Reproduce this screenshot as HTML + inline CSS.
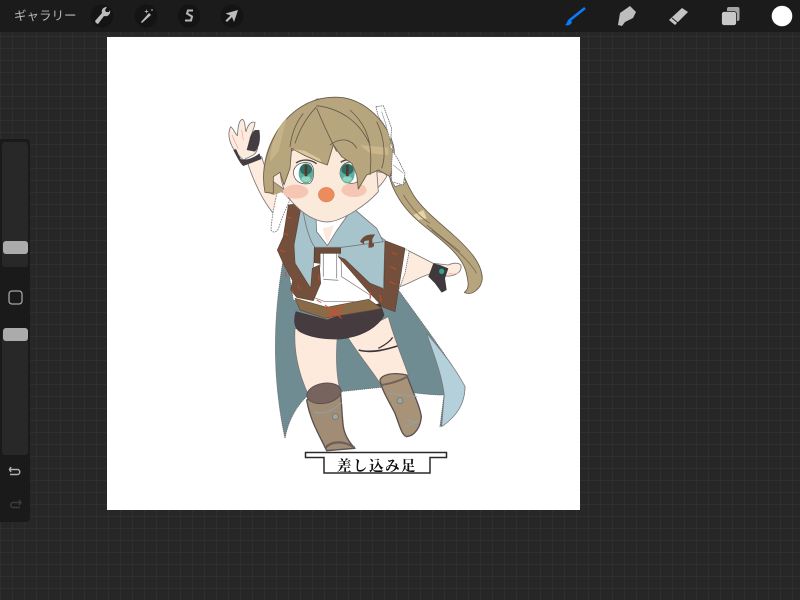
<!DOCTYPE html>
<html lang="ja"><head><meta charset="utf-8"><title>差し込み足</title>
<style>
html,body{margin:0;padding:0;width:800px;height:600px;overflow:hidden;background:#282828}
body{position:relative;font-family:"Liberation Sans","Noto Sans CJK JP",sans-serif}
.grid{position:absolute;inset:0;background-color:#272727;background-image:linear-gradient(to right,#2f2f2f 1px,transparent 1px),linear-gradient(to bottom,#2f2f2f 1px,transparent 1px);background-size:12px 12px;background-position:0 0}
.bar{position:absolute;left:0;top:0;width:800px;height:32px;background:#1b1b1b}
.gal{position:absolute;left:14px;top:7px;font-size:12.5px;line-height:18px;color:#b8b8b8}
.paper{position:absolute;left:107px;top:37px;width:473px;height:473px;background:#fff}
.side{position:absolute;left:0;top:139px;width:30px;height:383px;background:#1a1a1a;border-radius:0 4px 4px 0}
.track{position:absolute;left:2px;width:26px;background:#282828;border-radius:3px}
.thumb{position:absolute;left:3px;width:25px;height:13px;background:#ababab;border-radius:3px}
svg{position:absolute;left:0;top:0}
.soft{filter:blur(.35px)}
</style></head><body>
<div class="grid"></div>
<div class="paper"></div>
<div class="bar"></div>
<div class="gal">ギャラリー</div>
<div class="side">
<div class="track" style="top:3px;height:125px"></div>
<div class="track" style="top:192px;height:124px"></div>
<div class="thumb" style="top:102px"></div>
<div class="thumb" style="top:189px"></div>
</div>
<svg width="800" height="600" viewBox="0 0 800 600">
<!-- toolbar icons -->
<g fill="#141414"><circle cx="102" cy="16" r="11.5"/><circle cx="146" cy="16" r="11.5"/><circle cx="189" cy="16" r="11.5"/><circle cx="232" cy="16" r="11.5"/></g>
<path d="M96 23l-1-2 7-8c-1-3 1-6 5-6l-2 3 1 2 3 0 1-2c1 4-2 7-6 6l-6 8z" fill="#bdbdbd"/>
<path d="M142 23l-1-1 8-9 2 2zM146 9l1 2 2 0-2 1v2l-1-2-2 0 2-1zM152 9l1 1-1 1-1-1z" fill="#bdbdbd"/>
<path d="M193 10.500h-5l-1 3 5 3-1 4h-6" fill="none" stroke="#b5b5b5" stroke-width="2"/>
<path d="M238 10l-4 12-2-5-5 5-1.500-1.500 5-5-5-2z" fill="#bdbdbd"/>
<path d="M585 8L570 20" stroke="#0a7bff" stroke-width="2.600" fill="none"/>
<path d="M569 19l3 3c-1 3-4 4-7 3 2-1 2-4 4-6z" fill="#0a7bff"/>
<path d="M618 25l2-12 10-7 6 6-3 6-8 4-3 4z" fill="#bdbdbd"/>
<path d="M669 20l13-12 6 4-13 13z" fill="#c4c4c4"/>
<path d="M672 18l6 5" stroke="#1b1b1b" stroke-width="1"/>
<rect x="727" y="7" width="12.500" height="14" rx="2" fill="#a5a5a5"/>
<rect x="721.500" y="11.500" width="15" height="14" rx="2.500" fill="#c8c8c8" stroke="#1b1b1b" stroke-width=".8"/>
<circle cx="782" cy="16" r="10.300" fill="#fff"/>
<!-- side icons -->
<rect x="9" y="291" width="13" height="13" rx="3" fill="none" stroke="#a5a5a5" stroke-width="1.300"/>
<path d="M11 467l-1.500 2.500 1.500 2.500M10 469.500h7.500c3 0 3 5 0 5H10" fill="none" stroke="#b0b0b0" stroke-width="1.500"/>
<path d="M19 500l2 2.500-2 2.500M20.500 502.500H13c-3 0-3 5 0 5h7" fill="none" stroke="#3c3c3c" stroke-width="1.500"/>

<g class="soft">
<!-- lower: cape, legs -->
<g transform="translate(260 280) scale(.33333)" stroke-linejoin="round">
<path d="M75 -90C35 120 38 300 75 475C85 420 110 375 150 340L240 335L360 322C430 335 500 345 552 345L540 440C590 410 615 370 615 320C570 240 480 120 415 30L300 120 100 60Z" fill="#6f8c93" stroke="#6a6a6a" stroke-width="2.500" stroke-dasharray="4 2"/>
<path d="M500 160C550 220 590 270 615 320C615 370 590 410 545 440L553 345C545 280 520 220 500 160Z" fill="#b4d0da" stroke="#777" stroke-width="2"/>
<path d="M105 145C100 220 120 290 145 345L240 330C228 280 228 220 232 170Z" fill="#fdeadc" stroke="#777" stroke-width="2.500"/>
<path d="M262 170C300 230 335 270 360 310L445 285C430 240 400 170 385 110Z" fill="#fdeadc" stroke="#777" stroke-width="2.500"/>
<path d="M296 210C330 220 375 210 412 198" fill="none" stroke="#3d3639" stroke-width="5"/>
<path d="M355 205C375 195 390 185 398 172" fill="none" stroke="#3d3639" stroke-width="4"/>
<path d="M108 95C100 120 103 145 120 155C165 180 240 180 265 173C310 165 355 140 372 105L360 70 200 120Z" fill="#463c40" stroke="#3d3639" stroke-width="2"/>
<!-- boots -->
<path d="M140 360C150 420 175 460 200 512L285 505C270 490 255 470 250 440C245 400 245 360 240 325Z" fill="#a18d76" stroke="#5b5050" stroke-width="4"/>
<ellipse cx="192" cy="340" rx="52" ry="30" fill="#77645e" stroke="#5b5050" stroke-width="3" transform="rotate(-10 192 340)"/>
<path d="M195 505c20-25 60-22 88-2" fill="none" stroke="#6d5f57" stroke-width="7"/>
<path d="M160 395C190 405 215 395 245 368" fill="none" stroke="#8ba5a5" stroke-width="3"/>
<circle cx="226" cy="410" r="9" fill="#9aa79f" stroke="#6d6d6d" stroke-width="2"/>
<path d="M360 300C365 285 395 275 440 285C460 340 480 380 484 410C482 440 465 468 440 470C425 465 420 440 405 400C385 360 365 330 360 300Z" fill="#a99378" stroke="#5b5050" stroke-width="4"/>
<path d="M365 315C395 310 425 300 442 290" fill="none" stroke="#75625a" stroke-width="6"/>
<path d="M385 340L470 350" fill="none" stroke="#8ba5a5" stroke-width="3"/>
<circle cx="420" cy="362" r="9" fill="#9aa79f" stroke="#6d6d6d" stroke-width="2"/>
<path d="M432 440l45-15M440 420l35 8" fill="none" stroke="#8ba5a5" stroke-width="3"/>
</g>

<!-- ponytail and right arm -->
<g transform="translate(380 130) scale(.33333)" stroke-linejoin="round">
<path d="M85 362L160 400 205 405C225 395 245 400 243 410C245 425 225 440 200 438L150 432C120 440 90 460 60 470Z" fill="#fdebdd" stroke="#777" stroke-width="2.500"/>
<path d="M60 355L88 362 75 430 58 475 42 470Z" fill="#fff" stroke="#777" stroke-width="2.500" stroke-dasharray="4 2"/>
<path d="M160 400L145 440 165 460 185 488 200 480 195 445 205 415 180 405Z" fill="#3f383c"/>
<circle cx="185" cy="424" r="8" fill="#2aa98c"/>
<path d="M205 430c10 3 22 3 32-2" stroke="#f0a090" stroke-width="2" fill="none"/>
<path d="M25 110C25 130 30 150 38 170C60 220 90 255 135 290C190 335 245 375 258 425C265 455 270 475 253 487C275 500 305 475 307 445C305 400 270 360 220 315C175 275 125 235 100 195C85 170 70 140 60 100Z" fill="#b7a57d" stroke="#665a4b" stroke-width="2.500"/>
<path d="M100 255L130 240 140 265 115 270Z" fill="#e6d3a7"/>
<path d="M140 285L240 365M155 300C210 345 260 380 290 430M70 195C90 225 110 255 150 280" fill="none" stroke="#7a6c59" stroke-width="2.500"/>
<path d="M45 110L78 155 70 162 45 170 30 142Z" fill="#fff" stroke="#777" stroke-width="2.500"/>
</g>

<!-- upper -->
<g transform="translate(210 85) scale(.33333)" stroke-linejoin="round">
<path d="M110 225C130 290 160 350 190 385L240 345 200 320C180 290 165 250 155 215Z" fill="#fdebdd" stroke="#777" stroke-width="2.500"/>
<path d="M80 205C60 180 50 150 62 125C70 130 78 150 82 152C84 130 85 105 98 103C108 110 104 135 108 140C112 125 120 108 135 112C135 125 125 145 120 160C145 175 150 195 130 210L100 225Z" fill="#fdebdd" stroke="#777" stroke-width="2.500"/>
<path d="M66 150l18 40M95 135l5 30" stroke="#f0a090" stroke-width="2" fill="none"/>
<path d="M110 195C118 170 120 145 135 135L148 135C152 160 150 185 135 200Z" fill="#443d41"/>
<path d="M70 195C80 215 90 235 100 243L155 222 148 205C130 220 105 228 92 222L78 192Z" fill="#443d41"/>
<path d="M205 308C195 350 185 395 183 435C190 445 198 442 205 432C215 400 228 370 240 345Z" fill="#fff" stroke="#777" stroke-width="2.500" stroke-dasharray="5 3"/>
<path d="M205 130C170 180 150 250 165 320L190 330 280 300 500 290 560 250 540 130 420 50 320 40Z" fill="#b7a57d"/>
</g>

<!-- torso -->
<g transform="translate(270 220) scale(.33333)" stroke-linejoin="round">
<path d="M150 90L212 90 215 170 300 225 300 245 165 245 125 230 150 140Z" fill="#fff" stroke="#777" stroke-width="2"/>
<path d="M160 100v70M200 100v75M160 178l45 3" stroke="#888" stroke-width="2.500" fill="none"/>
<path d="M75 235L170 262 295 238 335 265 310 270 190 290 165 295 90 270Z" fill="#8a6b47" stroke="#5e4a3c" stroke-width="2"/>
<path d="M165 255L215 295M215 255L175 298M170 270L220 270M172 285L212 285" stroke="#d8492b" stroke-width="3" fill="none"/>
<path d="M95 -50L70 75 75 130 122 210 130 150 133 85 212 80 205 110 300 190 340 205 345 60 220 -30 100 -50Z" fill="#a7c4cd" stroke="#777" stroke-width="2"/>
<path d="M55 -45L95 -50 72 75 75 130 122 205 127 145 148 135 152 190 130 242 80 232 62 210 68 182 42 135 22 90 40 50Z" fill="#74503c" stroke="#5a4337" stroke-width="2"/>
<path d="M345 62L405 85 375 275 340 262 300 220 205 110 225 118 300 190 342 208Z" fill="#74503c" stroke="#5a4337" stroke-width="2"/>
<path d="M133 80L212 78 212 100 150 100 150 130 133 128Z" fill="#6c4c38" stroke="#4f3d33" stroke-width="2"/>
<path d="M275 62c10-18 20-22 45-22l-8 14 0 26-12 0 2-22-14 2-1 10Z" fill="#6c4c38"/>
<path d="M30 90l16 6M45 155l4 16M65 210l6 12M84 195l4 12M145 165l2 14M366 98l14 6M362 140l16 8M360 185l16 8M330 225l4 20M140 240l14 8M300 215l2 20M50 -10l14 5M40 40l14 5" stroke="#d8492b" stroke-width="2.500" fill="none"/>
</g>

<!-- head -->
<g transform="translate(210 85) scale(.33333)" stroke-linejoin="round">
<path d="M278 368C285 420 300 470 315 487L395 487 520 470 500 430 432 372 400 385 360 440 320 395Z" fill="#a7c4cd" stroke="#777" stroke-width="2.500"/>
<path d="M450 470c10-18 20-22 45-22l-8 14 0 26-12 0 2-22-14 2-1 10Z" fill="#6c4c38"/>
<path d="M318 400L412 392 378 440 352 482 320 440Z" fill="#fff" stroke="#777" stroke-width="2.500"/>
<path d="M338 430L372 422 352 478Z" fill="#fde9db"/>
<path d="M190 290C180 275 190 265 210 262L240 290 225 315Z" fill="#fde9db" stroke="#777" stroke-width="2.500"/>
<path d="M480 262C505 258 530 262 530 275 515 300 490 325 470 330Z" fill="#fde9db" stroke="#777" stroke-width="2.500"/>
<path d="M212 220C205 280 220 330 260 365C290 395 330 415 360 410C400 405 470 360 505 320L495 190 320 150Z" fill="#fbe9da" stroke="#777" stroke-width="2.500"/>
<ellipse cx="257" cy="320" rx="38" ry="21" fill="#f6c6b5"/>
<ellipse cx="432" cy="315" rx="38" ry="21" fill="#f6c6b5"/>
<ellipse cx="349" cy="329" rx="24" ry="22" fill="#ec8b5c" stroke="#d47c56" stroke-width="1.500"/>
<!-- eyes -->
<path d="M250 265C250 240 275 228 300 235C315 245 315 280 300 295C280 300 255 295 250 265Z" fill="#fff" stroke="#4b4a4a" stroke-width="2"/>
<ellipse cx="288" cy="265" rx="22" ry="30" fill="#5fae9d"/>
<ellipse cx="288" cy="253" rx="18" ry="16" fill="#2f6c63"/>
<ellipse cx="288" cy="282" rx="14" ry="9" fill="#8fd6c1"/>
<rect x="284" y="240" width="8" height="34" fill="#4f3b2a"/>
<path d="M390 265C390 242 405 230 425 232C445 240 450 275 440 292C420 300 390 290 390 265Z" fill="#fff" stroke="#4b4a4a" stroke-width="2"/>
<ellipse cx="412" cy="265" rx="22" ry="30" fill="#5fae9d"/>
<ellipse cx="412" cy="253" rx="18" ry="16" fill="#2f6c63"/>
<ellipse cx="412" cy="282" rx="14" ry="9" fill="#8fd6c1"/>
<rect x="408" y="240" width="8" height="34" fill="#4f3b2a"/>
<path d="M258 234C275 222 300 222 320 236M392 232C405 222 425 222 445 232" fill="none" stroke="#4a4442" stroke-width="4"/>
<!-- hair front -->
<path d="M165 322C150 250 175 170 222 110C270 55 330 30 400 38C470 50 530 110 550 180C558 215 550 245 540 275L505 255 490 262 470 270 445 312 440 270 425 235 395 215 370 180 352 240 330 232 285 212 245 190 240 250 222 300 210 262 190 275 190 325Z" fill="#b7a57d" stroke="#665a4b" stroke-width="2.500"/>
<path d="M250 192L285 198 330 222 335 232 285 210Z" fill="#dcc79a"/>
<path d="M450 180L535 188 535 210 480 205Z" fill="#cbb58b"/>
<path d="M230 100L205 200 180 230C180 180 200 130 230 100Z" fill="#c5b38a"/>
<path d="M320 65C290 95 270 130 255 175M320 70C345 130 365 170 380 200M320 62C390 70 450 110 480 180M280 85C260 110 245 145 240 185M420 75C470 120 490 170 480 270M360 180C400 150 430 170 440 190M500 110C520 150 530 210 515 250" fill="none" stroke="#665a4b" stroke-width="2.500"/>
<path d="M498 65L520 62 545 130 540 185 565 225 585 265 580 300 545 290 545 235 548 190 530 130 505 95Z" fill="#fff" stroke="#777" stroke-width="2.500" stroke-dasharray="5 2"/>
<path d="M515 80l15 45M550 240l30 25" stroke="#999" stroke-width="2" fill="none"/>
</g>
</g>

<!-- label -->
<path d="M305.500 452.500H446.500V457.500H430V473H324V457.500H305.500Z" fill="#fff" stroke="#2a2a2a" stroke-width="1.500"/>
<text x="377" y="471" text-anchor="middle" font-family="'Liberation Serif','Noto Serif CJK JP','Noto Serif CJK SC',serif" font-weight="700" font-size="14.500" letter-spacing="1.500" fill="#111">差し込み足</text>
</svg>
</body></html>
